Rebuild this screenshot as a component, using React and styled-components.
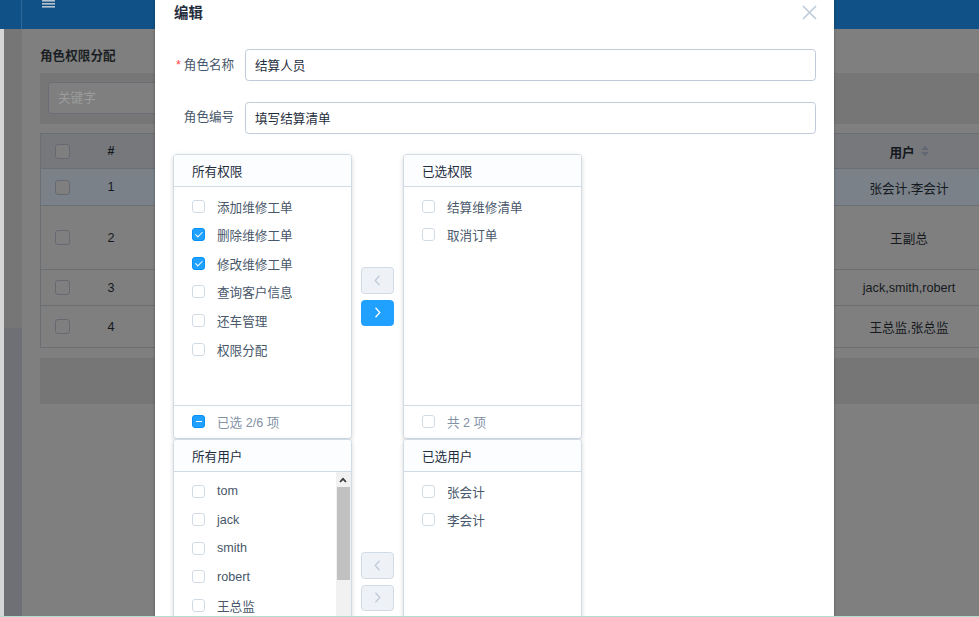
import React from "react";
import styled, { createGlobalStyle } from "styled-components";

const GlobalStyle = createGlobalStyle`
  html, body {
    margin: 0;
    padding: 0;
  }
  body {
    width: 979px;
    height: 617px;
    overflow: hidden;
    font-family: "Liberation Sans", "Noto Sans CJK SC", sans-serif;
  }
  * {
    box-sizing: border-box;
  }
`;

const rows = [
  { id: 1, h: 37, users: "张会计,李会计", active: true },
  { id: 2, h: 64, users: "王副总" },
  { id: 3, h: 36, users: "jack,smith,robert" },
  { id: 4, h: 42, users: "王总监,张总监" },
];

const permsLeft = [
  { name: "添加维修工单", on: false },
  { name: "删除维修工单", on: true },
  { name: "修改维修工单", on: true },
  { name: "查询客户信息", on: false },
  { name: "还车管理", on: false },
  { name: "权限分配", on: false },
];

const permsRight = ["结算维修清单", "取消订单"];

const usersLeft = [
  "tom", "jack", "smith", "robert", "王总监", "张总监", "王副总", "李副总",
  "王经理", "李经理", "赵主管", "钱主管", "孙出纳", "周出纳", "吴会计",
];

const usersRight = ["张会计", "李会计"];

function MenuIcon() {
  return (
    <svg width="13" height="8" viewBox="0 0 13 8">
      <rect x="0" y="0" width="13" height="1.6" fill="#b9c3cd" />
      <rect x="0" y="3" width="13" height="1.6" fill="#b9c3cd" />
      <rect x="0" y="6" width="13" height="1.6" fill="#b9c3cd" />
    </svg>
  );
}

function Chevron({ dir }) {
  return (
    <svg width="7" height="11" viewBox="0 0 7 11">
      <polyline
        points={dir === "left" ? "5.5,0.8 1.2,5.5 5.5,10.2" : "1.5,0.8 5.8,5.5 1.5,10.2"}
        fill="none"
        stroke="currentColor"
        strokeWidth="1.3"
      />
    </svg>
  );
}

function CloseIcon() {
  return (
    <svg width="15" height="15" viewBox="0 0 15 15">
      <path d="M1 1 L14 14 M14 1 L1 14" stroke="currentColor" strokeWidth="1.7" />
    </svg>
  );
}

function SortCaret() {
  return (
    <svg width="8" height="10" viewBox="0 0 8 10">
      <polygon points="4,0 8,4 0,4" fill="#5f6873" />
      <polygon points="0,6 8,6 4,10" fill="#5f6873" />
    </svg>
  );
}

function ScrollUpArrow() {
  return (
    <svg width="8" height="6" viewBox="0 0 8 6">
      <polyline points="1,5 4,1.8 7,5" fill="none" stroke="#3c3c3c" strokeWidth="1.8" />
    </svg>
  );
}

// classic scrollbar, drawn since the headless browser hides native ones
function FakeScrollbar({ visible, total }) {
  const track = 218 - 30;
  const thumb = Math.round((track * visible) / total);
  return (
    <ScrollTrack>
      <ScrollButton>
        <ScrollUpArrow />
      </ScrollButton>
      <ScrollThumb style={{ height: thumb }} />
    </ScrollTrack>
  );
}

function TransferPanel({ title, items, footer, footState, scroll }) {
  return (
    <Panel>
      <PanelHead>{title}</PanelHead>
      <PanelBody>
        {items.map((it) => (
          <Item key={it.name}>
            <Check $state={it.on ? "on" : "off"} />
            {it.name}
          </Item>
        ))}
        {scroll && <FakeScrollbar visible={218} total={items.length * 28.6 + 10} />}
      </PanelBody>
      <PanelFoot>
        <Check $state={footState} />
        {footer}
      </PanelFoot>
    </Panel>
  );
}

function Transfer({ left, right, leftFoot, rightFoot, leftState, toRight, scroll }) {
  return (
    <TransferRow>
      <TransferPanel title={left.title} items={left.items} footer={leftFoot} footState={leftState} scroll={scroll} />
      <TransferButtons>
        <ArrowButton>
          <Chevron dir="left" />
        </ArrowButton>
        <ArrowButton $active={toRight}>
          <Chevron dir="right" />
        </ArrowButton>
      </TransferButtons>
      <TransferPanel title={right.title} items={right.items} footer={rightFoot} footState="off" />
    </TransferRow>
  );
}

export default function App() {
  return (
    <>
      <GlobalStyle />
      <Screen>
        <Viewport>
          <TopBar>
            <BrandSlot />
            <MenuToggle>
              <MenuIcon />
            </MenuToggle>
          </TopBar>
          <Workspace>
            <Sidebar>
              <SideMenu />
              <SideRest />
            </Sidebar>
            <Content>
              <PageTitle>角色权限分配</PageTitle>
              <SearchPanel>
                <SearchInput placeholder="关键字" readOnly />
              </SearchPanel>
              <Table>
                <TableRow $h={34} $head>
                  <Cell>
                    <RowCheck />
                  </Cell>
                  <Cell $bold>#</Cell>
                  <Cell />
                  <Cell $bold>
                    用户
                    <CaretWrap>
                      <SortCaret />
                    </CaretWrap>
                  </Cell>
                </TableRow>
                {rows.map((r) => (
                  <TableRow key={r.id} $h={r.h} $active={r.active}>
                    <Cell>
                      <RowCheck />
                    </Cell>
                    <Cell>{r.id}</Cell>
                    <Cell />
                    <Cell>{r.users}</Cell>
                  </TableRow>
                ))}
              </Table>
              <Pager />
            </Content>
          </Workspace>

          <Dialog>
            <DialogHead>
              <DialogTitle>编辑</DialogTitle>
              <CloseButton>
                <CloseIcon />
              </CloseButton>
            </DialogHead>
            <DialogBody>
              <FormRow>
                <FormLabel>
                  <Required>*</Required>角色名称
                </FormLabel>
                <TextInput value="结算人员" readOnly />
              </FormRow>
              <FormRow>
                <FormLabel>角色编号</FormLabel>
                <TextInput value="填写结算清单" readOnly />
              </FormRow>
              <Transfer
                left={{ title: "所有权限", items: permsLeft }}
                right={{ title: "已选权限", items: permsRight.map((n) => ({ name: n, on: false })) }}
                leftFoot="已选 2/6 项"
                rightFoot="共 2 项"
                leftState="half"
                toRight
              />
              <Transfer
                left={{ title: "所有用户", items: usersLeft.map((n) => ({ name: n, on: false })) }}
                right={{ title: "已选用户", items: usersRight.map((n) => ({ name: n, on: false })) }}
                leftFoot="共 15 项"
                rightFoot="共 2 项"
                leftState="off"
                scroll
              />
            </DialogBody>
          </Dialog>
        </Viewport>
        <StatusLine />
      </Screen>
    </>
  );
}

const Screen = styled.div`
  width: 979px;
  height: 617px;
  display: flex;
  flex-direction: column;
  overflow: hidden;
`;

const Viewport = styled.div`
  position: relative;
  flex: 1;
  min-height: 0;
  display: flex;
  flex-direction: column;
  overflow: hidden;
`;

const StatusLine = styled.div`
  height: 1px;
  flex-shrink: 0;
  background: #b4dccc;
`;

const TopBar = styled.div`
  height: 29px;
  flex-shrink: 0;
  display: flex;
  background: #105287;
`;

const BrandSlot = styled.div`
  width: 22px;
  height: 100%;
  border-right: 1px solid #2f6896;
`;

const MenuToggle = styled.div`
  padding-left: 20px;
  display: flex;
  align-items: flex-start;
  line-height: 0;
`;

const Workspace = styled.div`
  flex: 1;
  min-height: 0;
  display: flex;
`;

const Sidebar = styled.div`
  width: 22px;
  flex-shrink: 0;
  display: flex;
  flex-direction: column;
  border-left: 4px solid #d6d6d6;
`;

const SideMenu = styled.div`
  height: 299px;
  background: #767676;
`;

const SideRest = styled.div`
  flex: 1;
  background: #6f7075;
`;

const Content = styled.div`
  flex: 1;
  min-width: 0;
  background: #7f7f7f;
  padding: 20px 0 0 18px;
  display: flex;
  flex-direction: column;
`;

const PageTitle = styled.div`
  font-size: 12.6px;
  font-weight: bold;
  line-height: 14px;
  color: #1b1f24;
  margin-bottom: 10px;
`;

const SearchPanel = styled.div`
  height: 51px;
  background: #767676;
  padding: 9px 8px;
`;

const SearchInput = styled.input`
  width: 220px;
  height: 32px;
  border: 1px solid #6b6f75;
  border-radius: 3px;
  background: #7f7f7f;
  padding: 0 9px;
  font: inherit;
  font-size: 12.6px;
  outline: none;
  &::placeholder {
    color: #9c9c9c;
  }
`;

const Table = styled.div`
  margin-top: 9px;
  border: 1px solid #6b6f74;
  border-right: none;
  display: flex;
  flex-direction: column;
`;

const TableRow = styled.div`
  height: ${(p) => p.$h}px;
  display: grid;
  grid-template-columns: 42px 56px 1fr 140px;
  background: ${(p) => (p.$head ? "#76787c" : p.$active ? "#7a8189" : "#7f7f7f")};
  border-top: ${(p) => (p.$head ? "none" : "1px solid #6b6f74")};
`;

const Cell = styled.div`
  display: flex;
  align-items: center;
  justify-content: center;
  font-size: 12.6px;
  font-weight: ${(p) => (p.$bold ? "bold" : "normal")};
  color: #15191e;
  white-space: nowrap;
`;

const CaretWrap = styled.span`
  margin-left: 6px;
  display: inline-flex;
`;

const RowCheck = styled.span`
  width: 15px;
  height: 15px;
  border: 1px solid #666a70;
  border-radius: 3px;
  background: #7f7f7f;
`;

const Pager = styled.div`
  margin-top: 10px;
  height: 46px;
  background: #767676;
`;

const Dialog = styled.div`
  position: absolute;
  left: 155px;
  top: -13.5px;
  width: 679px;
  background: #fff;
  border-radius: 2px;
  box-shadow: 0 1px 3px rgba(0, 0, 0, 0.3);
`;

const DialogHead = styled.div`
  position: relative;
  padding: 18px 18px 0;
`;

const DialogTitle = styled.div`
  font-size: 14.4px;
  font-weight: bold;
  line-height: 16px;
  color: #1f2d3d;
  padding-left: 1px;
`;

const CloseButton = styled.span`
  position: absolute;
  top: 18.5px;
  right: 17px;
  color: #bfcbd9;
  line-height: 0;
`;

const DialogBody = styled.div`
  padding: 28.5px 18px 27px;
`;

const FormRow = styled.div`
  display: flex;
  align-items: center;
  margin-bottom: 20.3px;
`;

const FormLabel = styled.label`
  width: 72px;
  flex-shrink: 0;
  padding-right: 10.8px;
  text-align: right;
  font-size: 12.6px;
  line-height: 14px;
  padding-bottom: 1px;
  color: #48576a;
  white-space: nowrap;
`;

const Required = styled.span`
  color: #ff4949;
  margin-right: 3px;
`;

const TextInput = styled.input`
  flex: 1;
  height: 32.4px;
  border: 1px solid #bfcbd9;
  border-radius: 3.6px;
  padding: 0 9px 1px;
  font: inherit;
  font-size: 12.6px;
  color: #1f2d3d;
  outline: none;
`;

const TransferRow = styled.div`
  display: flex;
  align-items: center;
`;

const TransferButtons = styled.div`
  padding: 0 9px;
  display: flex;
  flex-direction: column;
  gap: 5.4px;
`;

const ArrowButton = styled.button`
  width: 33.5px;
  height: 26.7px;
  padding: 0;
  display: flex;
  align-items: center;
  justify-content: center;
  border-radius: 3.6px;
  border: 1px solid ${(p) => (p.$active ? "#20a0ff" : "#d1dbe5")};
  background: ${(p) => (p.$active ? "#20a0ff" : "#eef1f6")};
  color: ${(p) => (p.$active ? "#fff" : "#bfcbd9")};
`;

const Panel = styled.div`
  width: 178.5px;
  height: 285px;
  flex-shrink: 0;
  display: flex;
  flex-direction: column;
  background: #fff;
  border: 1px solid #d1dbe5;
  border-radius: 3.6px;
  box-shadow: 0 2px 4px rgba(0, 0, 0, 0.12), 0 0 6px rgba(0, 0, 0, 0.04);
  overflow: hidden;
`;

const PanelHead = styled.div`
  height: 32px;
  flex-shrink: 0;
  display: flex;
  align-items: center;
  padding-left: 18px;
  padding-bottom: 1px;
  background: #fbfdff;
  border-bottom: 1px solid #d1dbe5;
  font-size: 12.6px;
  color: #1f2d3d;
`;

const PanelBody = styled.div`
  position: relative;
  flex: 1;
  min-height: 0;
  padding: 4.5px 0 5px;
  overflow: hidden;
`;

const ScrollTrack = styled.div`
  position: absolute;
  top: 0;
  right: 0;
  bottom: 0;
  width: 15px;
  background: #f1f1f1;
  display: flex;
  flex-direction: column;
`;

const ScrollButton = styled.div`
  height: 15px;
  flex-shrink: 0;
  display: flex;
  align-items: center;
  justify-content: center;
`;

const ScrollThumb = styled.div`
  margin: 0 1px 0 1px;
  background: #c1c1c1;
`;

const Item = styled.div`
  height: 28.6px;
  display: flex;
  align-items: center;
  gap: 12px;
  padding-left: 18px;
  font-size: 12.6px;
  color: #48576a;
  white-space: nowrap;
`;

const PanelFoot = styled.div`
  height: 33px;
  flex-shrink: 0;
  display: flex;
  align-items: center;
  gap: 12px;
  padding-left: 18px;
  padding-bottom: 1px;
  border-top: 1px solid #d1dbe5;
  font-size: 12.6px;
  color: #8391a5;
`;

const Check = styled.span`
  position: relative;
  width: 13px;
  height: 13px;
  flex-shrink: 0;
  border-radius: 3px;
  border: 1px solid ${(p) => (p.$state === "off" ? "#d1dbe5" : "#0190fe")};
  background: ${(p) => (p.$state === "off" ? "#fff" : "#20a0ff")};
  &::after {
    content: "";
    position: absolute;
    display: ${(p) => (p.$state === "off" ? "none" : "block")};
    ${(p) =>
      p.$state === "half"
        ? `left: 2.5px; top: 4.5px; width: 6px; height: 1.5px; background: #fff;`
        : `left: 3.5px; top: 1px; width: 2.5px; height: 6px; border: 1.3px solid #fff; border-left: 0; border-top: 0; transform: rotate(45deg);`}
  }
`;
